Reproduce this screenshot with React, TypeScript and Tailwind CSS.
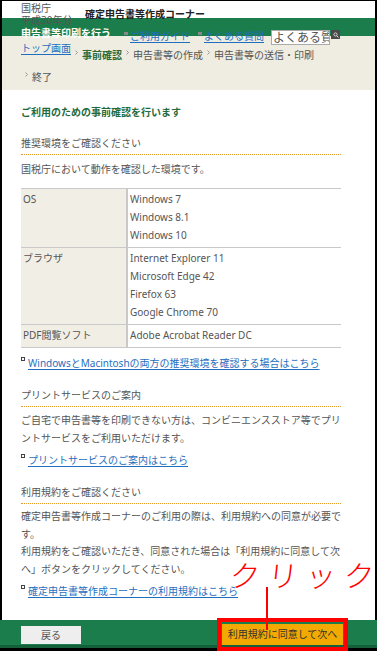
const crumbs = ['事前確認', '申告書等の作成', '申告書等の送信・印刷', '終了'];

const osList = ['Windows 7', 'Windows 8.1', 'Windows 10'];
const browsers = ['Internet Explorer 11', 'Microsoft Edge 42', 'Firefox 63', 'Google Chrome 70'];

const envRows = [
  { label: 'OS', items: osList },
  { label: 'ブラウザ', items: browsers },
  { label: 'PDF閲覧ソフト', items: ['Adobe Acrobat Reader DC'] },
];

const Chevron = () => (
  <span className="inline-flex w-[7px] relative -top-[3px]">
    <svg width="3" height="5" viewBox="0 0 3 5">
      <polyline points="0.5,0.5 2.5,2.5 0.5,4.5" fill="none" stroke="#999" strokeWidth="1" />
    </svg>
  </span>
);

const LinkLine = ({ text }: { text: string }) => (
  <div className="flex items-start leading-[18px]">
    <span className="mt-[3px] mr-[3px] w-[4px] h-[4px] border border-[#444] bg-white shrink-0"></span>
    <a href="#" className="text-[#1f6fc0] underline underline-offset-[2px]">{text}</a>
  </div>
);

const SectionTitle = ({ text }: { text: string }) => (
  <div className="leading-[18px] pb-[2px] border-b border-dotted border-[#e39a2a]">{text}</div>
);

export default function App() {
  return (
    <div className="relative w-[377px] h-[651px] flex flex-col bg-white overflow-hidden text-[10px] text-[#555] font-['Noto_Sans','Noto_Sans_CJK_JP',sans-serif]">
      <div className="flex-1 min-h-0 border-x-2 border-t border-black">
        {/* header */}
        <header className="h-[89px] bg-[linear-gradient(to_bottom,#ffffff_0,#ffffff_17px,#1b7d4b_17px,#1b7d4b_35px,#efede2_35px)]">
          <div className="flex items-start pl-[19px] pt-[1px] h-[25px]">
            <div className="w-[64px] leading-[12px]">
              <div>国税庁</div>
              <div>平成30年分</div>
            </div>
            <div className="mt-[6px] leading-[12px] font-bold text-[#222]">確定申告書等作成コーナー</div>
          </div>
          <div className="flex items-start pl-[19px] h-[18px]">
            <div className="w-[103px] leading-[14px] font-bold text-white">申告書等印刷を行う</div>
            <span className="mt-[6px] w-[4px] h-[3px] bg-[#888]"></span>
            <a href="#" className="ml-[2px] mt-[3px] leading-[14px] text-[#1f6fc0] underline underline-offset-[2px]">ご利用ガイド</a>
            <span className="ml-[8px] mt-[6px] w-[4px] h-[3px] bg-[#888]"></span>
            <a href="#" className="ml-[2px] mt-[3px] leading-[14px] text-[#1f6fc0] underline underline-offset-[2px]">よくある質問</a>
            <input
              placeholder="よくある質問"
              className="ml-[7px] mt-[4px] w-[59px] h-[15px] pl-[1px] border border-[#aaa] bg-white text-[12px] leading-[13px] placeholder:text-[#555] outline-none"
            />
            <span className="ml-[1px] mt-[4px] w-[9px] h-[9px] bg-[#4a4a4a] flex items-center justify-center">
              <svg width="6" height="6" viewBox="0 0 6 6">
                <circle cx="2.5" cy="2.5" r="1.6" fill="none" stroke="#ddd" strokeWidth="0.9" />
                <line x1="3.7" y1="3.7" x2="5.5" y2="5.5" stroke="#ddd" strokeWidth="1" />
              </svg>
            </span>
          </div>
          <nav className="flex flex-wrap pl-[19px] w-[339px] leading-[22px]">
            <a href="#" className="relative -top-[7px] text-[#1f6fc0] underline underline-offset-[2px]">トップ画面</a>
            {crumbs.map((c, i) => (
              <span key={i} className="pl-[4px] flex items-center">
                <Chevron />
                <span className={i === 0 ? 'font-bold text-[#2b6a38]' : ''}>{c}</span>
              </span>
            ))}
          </nav>
        </header>

        {/* main */}
        <main className="pl-[19px] pr-[34px] pt-[13px]">
          <h1 className="leading-[18px] font-bold text-[#1f6b3c]">ご利用のための事前確認を行います</h1>

          <div className="mt-[13px]">
            <SectionTitle text="推奨環境をご確認ください" />
            <p className="mt-[5px] leading-[18px]">国税庁において動作を確認した環境です。</p>
            <div className="mt-[10px] border-t border-[#c9c9c9]">
              {envRows.map((row, i) => (
                <div key={i} className="flex border-b border-[#c9c9c9] leading-[18px]">
                  <div className="w-[105px] bg-[#f1eee5] pl-[2px] pt-[1px] pb-[3px]">{row.label}</div>
                  <div className="flex-1 border-l-2 border-[#c9c9c9] pl-[2px] pt-[1px] pb-[3px]">
                    {row.items.map((it) => (
                      <div key={it}>{it}</div>
                    ))}
                  </div>
                </div>
              ))}
            </div>
            <div className="mt-[6px]">
              <LinkLine text="WindowsとMacintoshの両方の推奨環境を確認する場合はこちら" />
            </div>
          </div>

          <div className="mt-[14px]">
            <SectionTitle text="プリントサービスのご案内" />
            <p className="mt-[4px] leading-[18px]">
              ご自宅で申告書等を印刷できない方は、コンビニエンスストア等でプリントサービスをご利用いただけます。
            </p>
            <div className="mt-[4px]">
              <LinkLine text="プリントサービスのご案内はこちら" />
            </div>
          </div>

          <div className="mt-[14px]">
            <SectionTitle text="利用規約をご確認ください" />
            <p className="mt-[4px] leading-[17.6px]">
              確定申告書等作成コーナーのご利用の際は、利用規約への同意が必要です。
              <br />
              利用規約をご確認いただき、同意された場合は「利用規約に同意して次へ」ボタンをクリックしてください。
            </p>
            <div className="mt-[4px]">
              <LinkLine text="確定申告書等作成コーナーの利用規約はこちら" />
            </div>
          </div>
        </main>
      </div>

      {/* footer */}
      <footer className="h-[31px] shrink-0 flex flex-col bg-[#1b7d4b] border-b-[3px] border-black">
        <div className="h-[25px] flex justify-between items-start pl-[21px] pr-[34px]">
          <button className="mt-[6px] w-[60px] h-[18px] bg-[#eeeeee] text-[#555] text-[10px] leading-[18px]">戻る</button>
          <div className="relative mt-[4px]">
            <button className="w-[121px] h-[21px] bg-[#f2a900] text-[#333] text-[10px] leading-[21px]">利用規約に同意して次へ</button>
            <span className="absolute -left-[5px] -right-[5px] -top-[6px] -bottom-[6px] border-[4px] border-[#ff0000]"></span>
          </div>
        </div>
        <div className="h-[3px] bg-[#14603a]"></div>
      </footer>

      {/* annotation */}
      <div className="absolute left-[230px] top-[559px] whitespace-nowrap text-[30px] leading-[30px] text-[#ff0000] -skew-x-6 font-light font-['Noto_Sans_CJK_JP',sans-serif]">
        <span className="tracking-[8px]">クリッ</span>ク
      </div>
      <span className="absolute left-[266px] top-[587px] w-[2px] h-[43px] bg-[#ff0000]"></span>
    </div>
  );
}
